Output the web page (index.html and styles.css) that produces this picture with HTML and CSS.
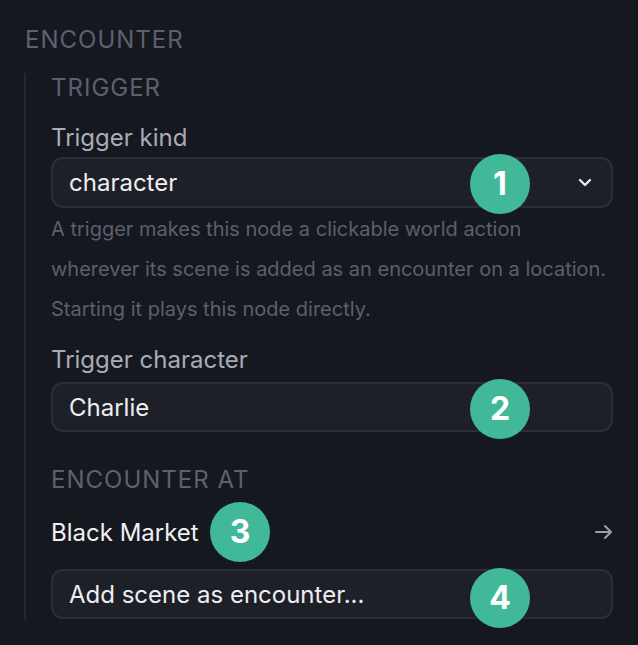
FILE: index.html
```html
<!DOCTYPE html>
<html>
<head>
<meta charset="utf-8">
<link rel="stylesheet" href="styles.css">
</head>
<body>
<div class="panel">
  <div class="section-title">ENCOUNTER</div>
  <div class="group">
    <div class="sub-title">TRIGGER</div>
    <div class="label first">Trigger kind</div>
    <div class="field select">
      <span class="value">character</span>
      <svg class="chevron" width="14" height="9" viewBox="0 0 14 9"><path d="M2 2 L7 7 L12 2" fill="none" stroke="#e8e9ee" stroke-width="2.4" stroke-linecap="round" stroke-linejoin="round"/></svg>
      <span class="badge b1">1</span>
    </div>
    <div class="help">A trigger makes this node a clickable world action wherever its scene is added as an encounter on a location. Starting it plays this node directly.</div>
    <div class="label second">Trigger character</div>
    <div class="field input">
      <span class="value">Charlie</span>
      <span class="badge b2">2</span>
    </div>
    <div class="sub-title at">ENCOUNTER AT</div>
    <div class="row">
      <span class="place">Black Market</span>
      <span class="badge b3">3</span>
      <svg class="arrow" width="18" height="16" viewBox="0 0 18 16"><path d="M1 8 H16 M10 2 L16 8 L10 14" fill="none" stroke="#9c9ea9" stroke-width="2" stroke-linecap="round" stroke-linejoin="round"/></svg>
    </div>
    <div class="field input add">
      <span class="value">Add scene as encounter...</span>
      <span class="badge b4">4</span>
    </div>
  </div>
</div>
</body>
</html>
```

FILE: styles.css
```css
html, body {
  margin: 0;
  padding: 0;
  background: #16181f;
}
body {
  font-family: Inter, "Noto Sans", sans-serif;
  width: 638px;
  height: 645px;
  overflow: hidden;
}
.panel {
  padding: 26px 25px 0 24px;
}
.section-title {
  font-size: 24px;
  line-height: 28px;
  letter-spacing: 1px;
  color: #5d6070;
  padding-left: 1px;
  margin-bottom: 19px;
}
.group {
  border-left: 2px solid #262831;
  padding: 1px 0 0 25px;
  height: 547px;
  box-sizing: border-box;
}
.sub-title {
  font-size: 24px;
  line-height: 28px;
  letter-spacing: 1px;
  color: #5d6070;
}
.label {
  font-size: 24px;
  line-height: 28px;
  color: #a9acb8;
}
.label.first { margin-top: 22px; }
.label.second { margin-top: 17px; }
.field {
  position: relative;
  display: flex;
  align-items: center;
  height: 51px;
  box-sizing: border-box;
  border: 2px solid #2c2e37;
  border-radius: 12px;
  background: #1e2028;
  padding: 0 18px 0 16px;
}
.select { margin-top: 5px; }
.input { margin-top: 8px; height: 50px; }
.value {
  font-size: 24px;
  color: #eeeef2;
  flex: 1;
}
.chevron { margin-right: 1px; }
.help {
  font-size: 20px;
  line-height: 40px;
  color: #5c5f6d;
  margin-top: 1px;
}
.sub-title.at { margin-top: 34px; }
.row {
  position: relative;
  display: flex;
  align-items: center;
  justify-content: space-between;
  height: 40px;
  margin-top: 18px;
}
.place {
  font-size: 24px;
  color: #f0f0f3;
}
.add { margin-top: 17px; }
.badge {
  position: absolute;
  width: 60px;
  height: 60px;
  border-radius: 50%;
  background: #41b999;
  color: #ffffff;
  font-weight: 700;
  font-size: 32px;
  display: flex;
  align-items: center;
  justify-content: center;
  line-height: 1;
}
.b1 { left: 417px; top: -5px; }
.b2 { left: 417px; top: -5px; }
.b3 { left: 159px; top: -10px; }
.b4 { left: 417px; top: -3px; }
```
